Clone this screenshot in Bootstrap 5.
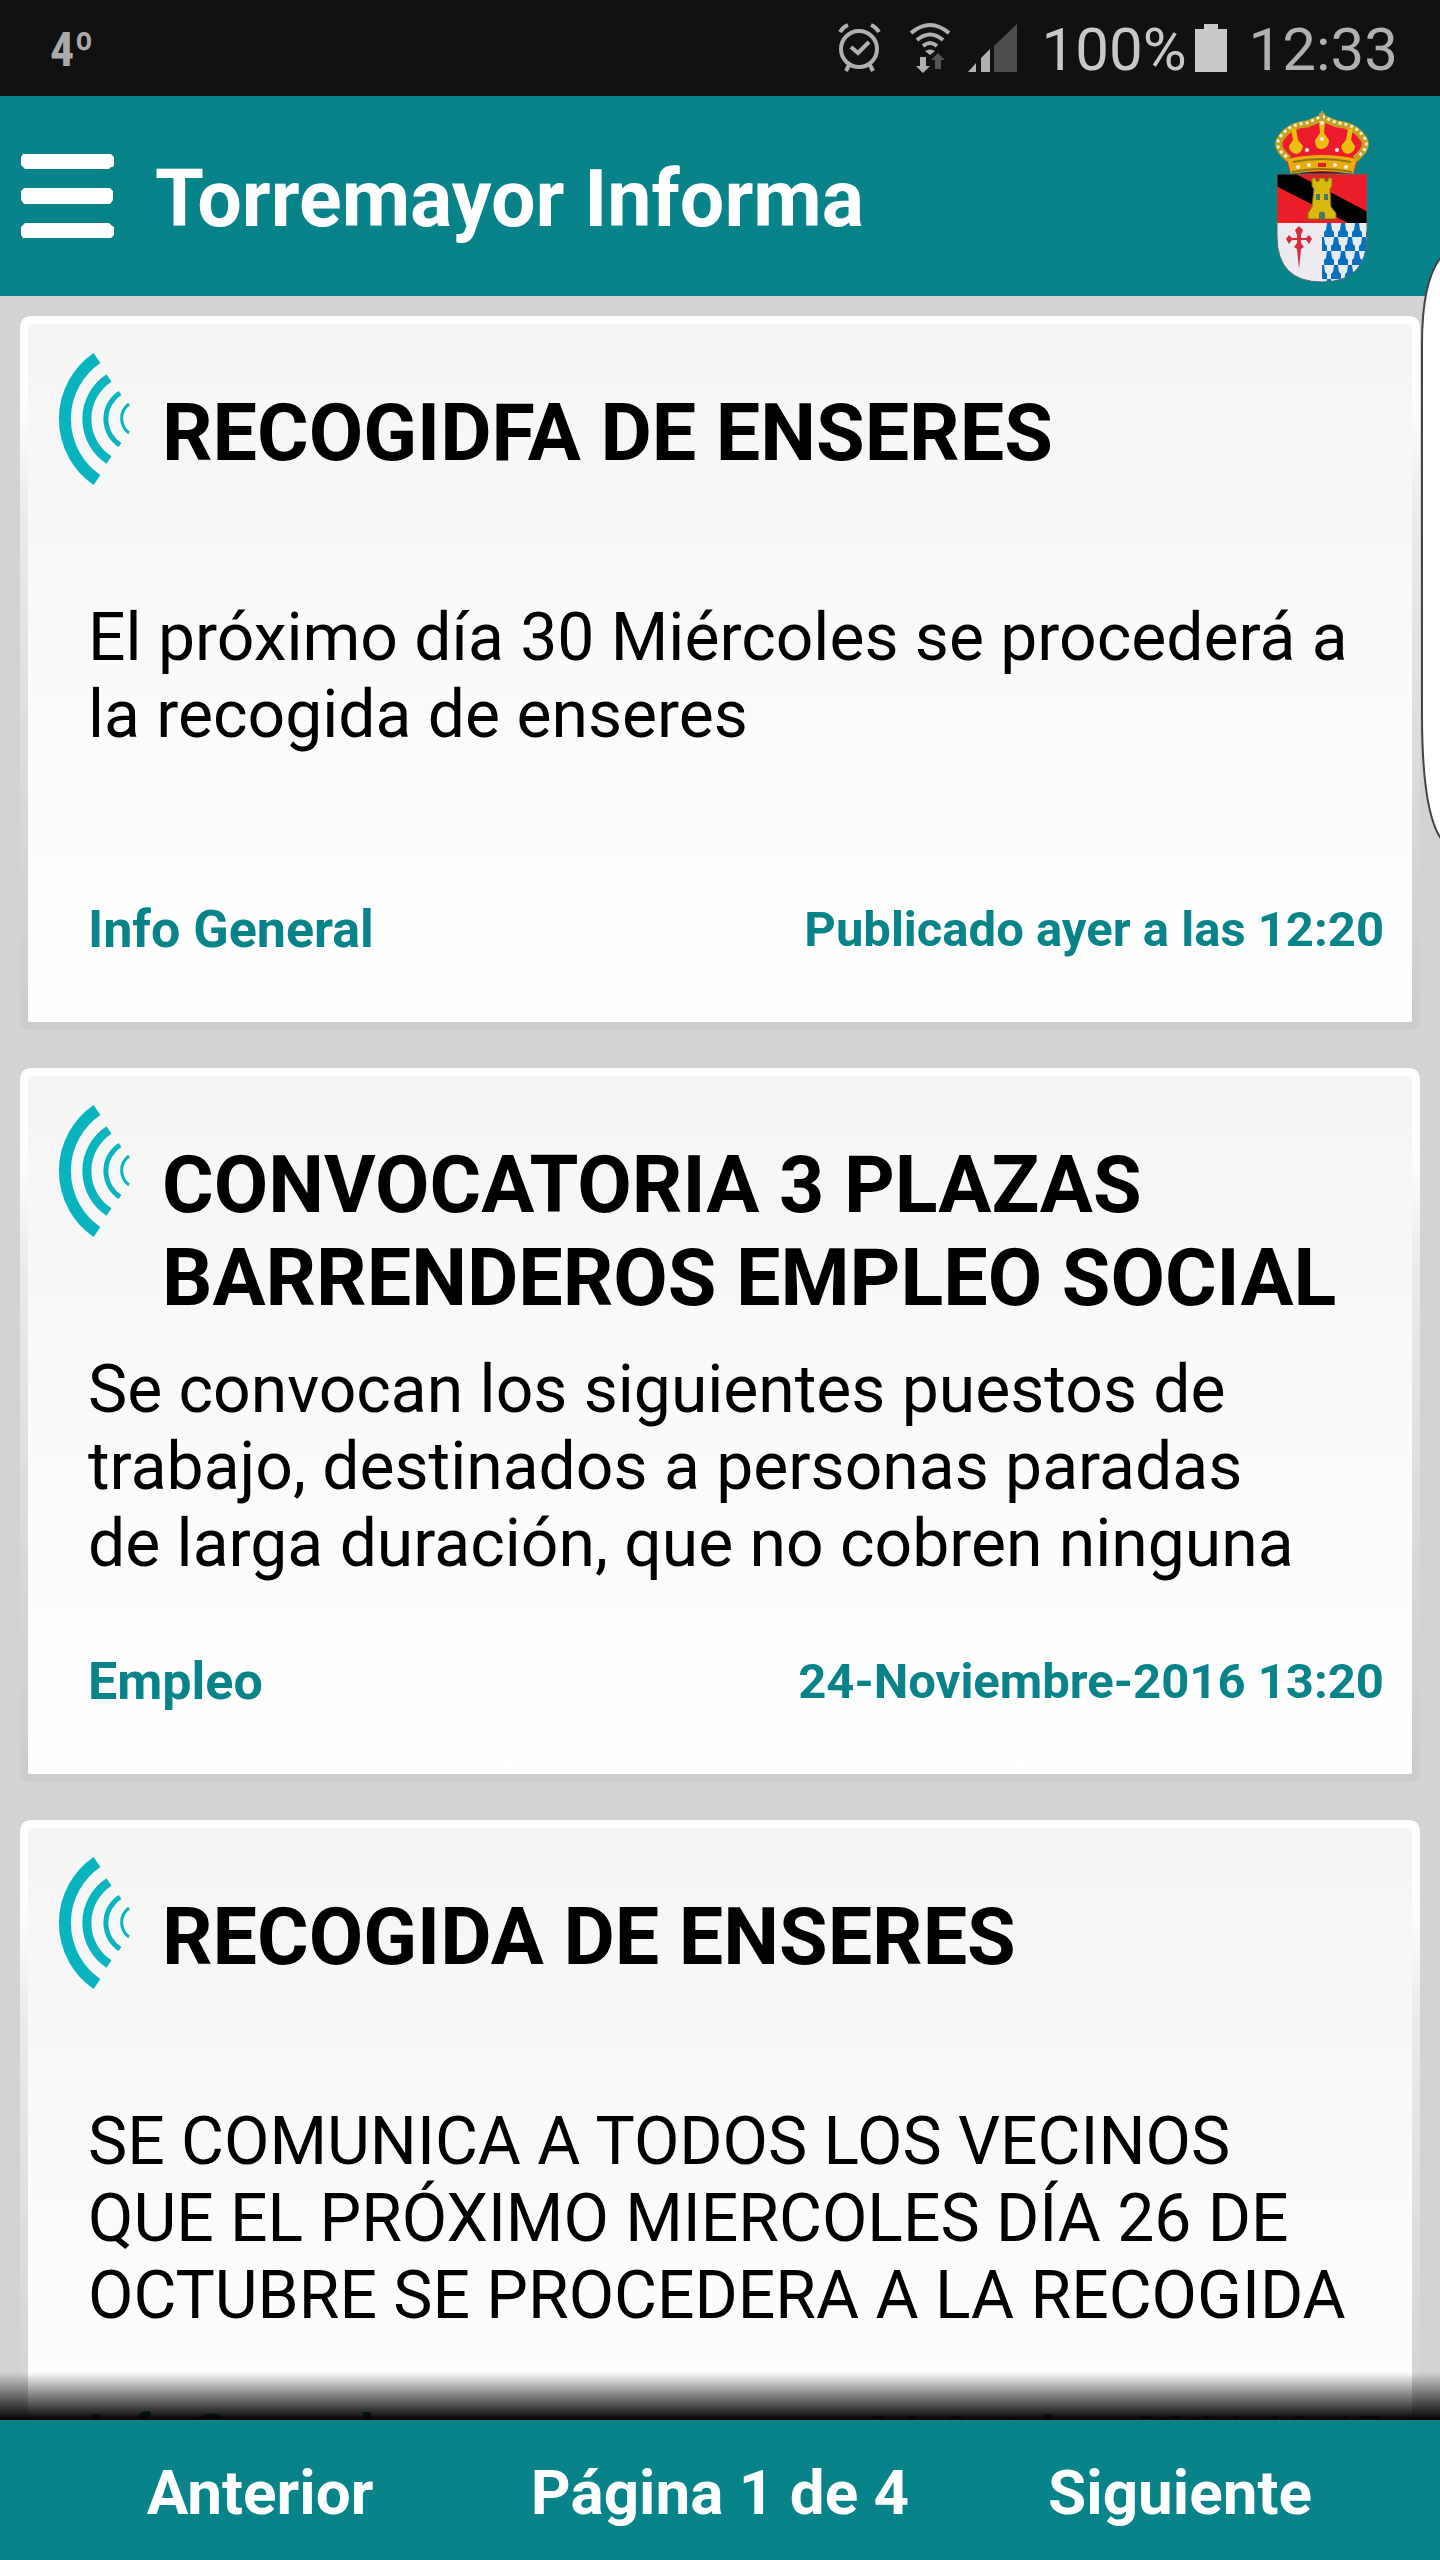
<!DOCTYPE html>
<html lang="es">
<head>
<meta charset="utf-8">
<meta name="viewport" content="width=device-width, initial-scale=1">
<title>Torremayor Informa</title>
<link href="https://cdn.jsdelivr.net/npm/bootstrap@5.3.0/dist/css/bootstrap.min.css" rel="stylesheet">
<style>
  :root { --teal: #088389; }
  body { font-family: Roboto, "Noto Sans", sans-serif; background: #d3d3d3; color: #000; }
  .status-bar { height: 96px; background: #111; color: #b0b0b0; padding: 0 42px 0 50px; font-size: 60px; line-height: 96px; }
  .status-bar span { padding-top: 4px; }
  .temperature { font: bold 48px/96px "Roboto Condensed", "Liberation Sans Narrow", Roboto, sans-serif; color: #aaa; }
  .battery-level { color: #c8c8c8; }
  .app-bar { height: 200px; background: var(--teal); padding: 0 70px 0 20px; }
  .app-title { font-size: 79px; line-height: 93px; font-weight: 700; padding: 7px 0 0 40px; }
  .news-list { padding: 20px 20px 0; gap: 38px; }
  .news-item {
    height: 714px; flex-shrink: 0; border: 8px solid transparent; border-radius: 10px;
    background: linear-gradient(#f5f5f5, #fff) padding-box,
                linear-gradient(#fff 0, #fff 10%, #ebebeb 28%, #d6d6d6 75%, #ccc 100%) border-box;
    padding: 29px 28px 0 30px; color: #000;
  }
  .news-head { gap: 30px; height: 219px; }
  .news-title { font-size: 79px; line-height: 93px; font-weight: 700; padding-top: 34px; }
  .news-text { font-size: 66px; line-height: 77px; height: 231px; margin-top: 27px; padding: 0 30px; }
  .news-meta { margin-top: 70px; padding-left: 30px; line-height: 60px; font-weight: 700; }
  .news-meta a { font-size: 52px; color: var(--teal); }
  .news-meta time { font-size: 49px; color: var(--teal); }
  .pager { position: relative; background: var(--teal); height: 140px; padding: 6px 30px 0; font-size: 62px; line-height: 72px; }
  .pager::before { content: ""; position: absolute; left: 0; right: 0; bottom: 100%; height: 48px; background: linear-gradient(transparent, #000); }
  .edge-handle { position: absolute; top: 244px; right: 0; width: 20px; height: 610px; }
</style>
</head>
<body>
<svg class="d-none" aria-hidden="true">
  <symbol id="waves" viewBox="0 0 74 132">
    <g fill="none" stroke="#08b5be">
      <path d="M39 5A74 74 0 0 0 39 127" stroke-width="12"/>
      <path d="M51 25A49 49 0 0 0 51 107" stroke-width="9"/>
      <path d="M62 40A31 31 0 0 0 62 92" stroke-width="5"/>
      <path d="M71 51A18 18 0 0 0 71 80" stroke-width="3"/>
    </g>
  </symbol>
</svg>
<div class="vh-100 d-flex flex-column overflow-hidden position-relative">
  <div class="status-bar d-flex justify-content-between align-items-center flex-shrink-0">
    <span class="temperature">4º</span>
    <div class="d-flex align-items-center">
      <svg width="210" height="96" viewBox="832 0 210 96" fill="none" stroke="#b0b0b0" aria-hidden="true">
        <circle cx="860" cy="49" r="18" stroke-width="4"/>
        <path d="M852 47l7 6 11-11M841 32q3-5 8-7M880 32q-3-5-8-7M850 65l-3 6M871 65l3 6" stroke-width="4"/>
        <path d="M912 33q19-16 38 0M918 40q13-11 26 0M924 46q7-6 14 0" stroke-width="4"/>
        <path d="M931 55l-5-4q5-3 10 0zM921 57h6v9h4l-7 7-7-7h4z" fill="#b0b0b0" stroke="none"/>
        <path d="M936 69v-9h-4l7-7 7 7h-4v9z" fill="#555" stroke="none"/>
        <path d="M969 72l8-9v9zM982 72V58l9-9v23z" fill="#b0b0b0" stroke="none"/>
        <path d="M995 72V46l23-22v48z" fill="#4d4d4d" stroke="none"/>
      </svg>
      <span class="battery-level">100%</span>
      <svg width="62" height="96" viewBox="0 0 62 96" aria-hidden="true"><path d="M8 29h9v-5h14v5h9v43H8z" fill="#c8c8c8"/></svg>
      <span>12:33</span>
    </div>
  </div>

  <header class="app-bar d-flex align-items-center text-white flex-shrink-0">
    <button class="btn border-0 p-0 d-flex" type="button" aria-label="Menú">
      <svg width="95" height="86" viewBox="0 0 95 86" fill="#fff"><path d="M3 1h88l3 3v8q0 2-3 2l-2 2H5l-2-2-2-2V4zM4 35h86l3 3v9l-3 4H4l-3-4v-9zM5 70h84l2 2 3 2v8l-3 3H3l-2-3v-8l2-2z"/></svg>
    </button>
    <h1 class="app-title mb-0 flex-grow-1">Torremayor Informa</h1>
    <svg width="96" height="176" viewBox="0 0 96 176" role="img" aria-label="Escudo de Torremayor">
      <defs>
        <clipPath id="shield"><path d="M3 66h90v62q0 46-45 46T3 128z"/></clipPath>
        <pattern id="vair" width="14" height="28" patternUnits="userSpaceOnUse" x="48" y="115">
          <rect width="14" height="28" fill="#e6ebf2"/>
          <path d="M5 0h4l1 7 2 2v5H2V9l2-2zM-2 14h4l1 7 2 2v5H-5v-5l2-2zM12 14h4l1 7 2 2v5H9v-5l2-2z" fill="#0870bd"/>
        </pattern>
      </defs>
      <path d="M12 52Q-1 40 5 29q8-12 24-13 10-1 19-6 9 5 19 6 16 1 24 13 6 11-7 23L80 64H16z" fill="#ec1c2e"/>
      <path d="M15 51Q0 39 7 30q9-13 26-14l15-6 15 6q17 1 26 14 7 9-8 21" fill="none" stroke="#c79f1c" stroke-width="7"/>
      <path d="M13 49Q-1 39 6 29q9-13 27-14l15-7 15 7q18 1 27 14 7 10-7 20" fill="none" stroke="#f1ead8" stroke-width="3" stroke-dasharray="3 3"/>
      <path d="M48 3v10M45 6h6" stroke="#b6a03b" stroke-width="2"/>
      <path d="M45 13h6l-1 12 5 7q0 8-7 9t-7-9l5-7zM17 20l5 1 2 11 5 6q-1 7-7 8-7-2-7-8l4-6zM79 20l-5 1-2 11-5 6q1 7 7 8 7-2 7-8l-4-6z" fill="#efbd0b"/>
      <path d="M13 51q35-8 70 0l-4 15q-31-6-62 0z" fill="#e9ad0c"/>
      <path d="M19 54q29-6 58 0M18 64q30-6 60 0" fill="none" stroke="#8f7618" stroke-width="2"/>
      <path d="M19 66q29-5 58 0z" fill="#5c0f12"/>
      <g fill="#eee"><circle cx="24" cy="59" r="2"/><circle cx="35" cy="57" r="2"/><circle cx="61" cy="57" r="2"/><circle cx="72" cy="59" r="2"/><circle cx="33" cy="42" r="2"/><circle cx="63" cy="42" r="2"/><circle cx="48" cy="31" r="2"/><circle cx="48" cy="15" r="2"/></g>
      <rect x="44" y="55" width="8" height="4" fill="#d8232a"/>
      <g clip-path="url(#shield)">
        <rect x="2" y="66" width="92" height="49" fill="#ec1c28"/>
        <path d="M2 66h20l72 38v12H76L2 78z" fill="#000"/>
        <rect x="2" y="115" width="46" height="60" fill="#eceaf0"/>
        <rect x="48" y="115" width="46" height="60" fill="url(#vair)"/>
      </g>
      <path d="M3 66h90v62q0 46-45 46T3 128z" fill="none" stroke="#526b70" stroke-width="1"/>
      <path d="M38 70h4v3h3v-3h6v3h3v-3h4v8l-2 3 1 18 5 6v6H34v-6l4-6 2-18-2-3z" fill="#d9b90e" stroke="#806c12"/>
      <path d="M42 86h4v6h-4zM50 86h4v6h-4zM45 111v-6q3-3 6 0v6z" fill="#4a7560"/>
      <path d="M25 118l4 4-2 5v3h5l3-3 3 4-3 5-3-4h-5v3l3 4-3 2-2 20-2-20-3-2 3-4v-3h-5l-3 4-3-5 3-4 3 3h5v-3l-2-5z" fill="#d82c3c"/>
    </svg>
  </header>

  <main class="news-list d-flex flex-column flex-grow-1 overflow-hidden">
    <article class="news-item">
      <div class="news-head d-flex">
        <svg class="flex-shrink-0" width="74" height="132" aria-hidden="true"><use href="#waves"/></svg>
        <h2 class="news-title mb-0">RECOGIDFA DE ENSERES</h2>
      </div>
      <p class="news-text mb-0">El próximo día 30 Miércoles se procederá a la recogida de enseres</p>
      <div class="news-meta d-flex justify-content-between align-items-center">
        <a class="text-decoration-none" href="#">Info General</a>
        <time>Publicado ayer a las 12:20</time>
      </div>
    </article>

    <article class="news-item">
      <div class="news-head d-flex">
        <svg class="flex-shrink-0" width="74" height="132" aria-hidden="true"><use href="#waves"/></svg>
        <h2 class="news-title mb-0">CONVOCATORIA 3 PLAZAS BARRENDEROS EMPLEO SOCIAL</h2>
      </div>
      <p class="news-text mb-0">Se convocan los siguientes puestos de trabajo, destinados a personas paradas<br>de larga duración, que no cobren ninguna</p>
      <div class="news-meta d-flex justify-content-between align-items-center">
        <a class="text-decoration-none" href="#">Empleo</a>
        <time>24-Noviembre-2016 13:20</time>
      </div>
    </article>

    <article class="news-item">
      <div class="news-head d-flex">
        <svg class="flex-shrink-0" width="74" height="132" aria-hidden="true"><use href="#waves"/></svg>
        <h2 class="news-title mb-0">RECOGIDA DE ENSERES</h2>
      </div>
      <p class="news-text mb-0">SE COMUNICA A TODOS LOS VECINOS QUE EL PRÓXIMO MIERCOLES DÍA 26 DE OCTUBRE SE PROCEDERA A LA RECOGIDA</p>
      <div class="news-meta d-flex justify-content-between align-items-center">
        <a class="text-decoration-none" href="#">Info General</a>
        <time>24-Octubre-2016 12:15</time>
      </div>
    </article>
  </main>

  <nav class="pager d-flex align-items-center text-white text-center fw-bold flex-shrink-0" aria-label="Páginas">
    <button class="col-4 bg-transparent border-0 p-0 text-white fw-bold" type="button">Anterior</button>
    <span class="col-4">Página 1 de 4</span>
    <button class="col-4 bg-transparent border-0 p-0 text-white fw-bold" type="button">Siguiente</button>
  </nav>

  <svg class="edge-handle" viewBox="0 0 20 610" aria-hidden="true"><path d="M22 12Q2 35 2 100V470Q2 570 22 596" fill="#fff" stroke="#444" stroke-width="2"/></svg>
</div>
<script src="https://cdn.jsdelivr.net/npm/bootstrap@5.3.0/dist/js/bootstrap.bundle.min.js"></script>
</body>
</html>
